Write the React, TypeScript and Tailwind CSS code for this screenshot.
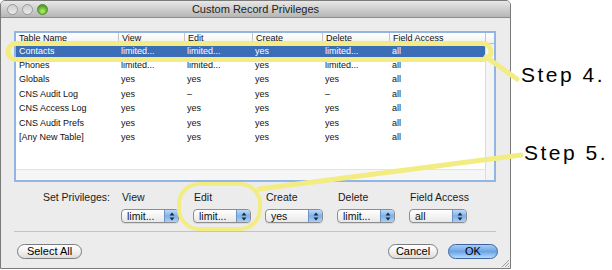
const rows = [
  ['Contacts', 'limited...', 'limited...', 'yes', 'limited...', 'all'],
  ['Phones', 'limited...', 'limited...', 'yes', 'limited...', 'all'],
  ['Globals', 'yes', 'yes', 'yes', 'yes', 'all'],
  ['CNS Audit Log', 'yes', '–', 'yes', '–', 'all'],
  ['CNS Access Log', 'yes', 'yes', 'yes', 'yes', 'all'],
  ['CNS Audit Prefs', 'yes', 'yes', 'yes', 'yes', 'all'],
  ['[Any New Table]', 'yes', 'yes', 'yes', 'yes', 'all'],
];

const headers = ['Table Name', 'View', 'Edit', 'Create', 'Delete', 'Field Access'];

const privileges = [
  { label: 'View', value: 'limit...' },
  { label: 'Edit', value: 'limit...' },
  { label: 'Create', value: 'yes' },
  { label: 'Delete', value: 'limit...' },
  { label: 'Field Access', value: 'all' },
];

const gridCols = 'grid grid-cols-[102px_66px_68px_70px_67px_96px]';

function Light({ green = false }: { green?: boolean }) {
  return (
    <span
      className={`block h-[11px] w-[11px] rounded-full border ${
        green
          ? 'border-[#4f8a2b] bg-[radial-gradient(circle_at_50%_70%,#b6f07a,#5fae2c_60%,#3f7f1c)]'
          : 'border-[#9a9a9a] bg-gradient-to-b from-[#cfcfcf] to-[#e9e9e9]'
      }`}
    />
  );
}

function Popup({ value }: { value: string }) {
  return (
    <div className="mt-[5px] flex h-[14px] w-[58px] overflow-hidden rounded-[4px] border border-[#8d8d8d] bg-gradient-to-b from-white to-[#e8e8e8] shadow-[0_1px_0_rgba(0,0,0,0.08)]">
      <span className="flex-1 pl-[5px] text-[10.5px] leading-[12px] text-[#111]">{value}</span>
      <span className="flex w-[14px] flex-col items-center justify-center border-l border-[#6f93c4] bg-gradient-to-b from-[#bcdaf7] via-[#7fb2ea] to-[#a9d0f7]">
        <svg width="6" height="9" viewBox="0 0 6 9">
          <path d="M3 0.5 L5.5 3.5 H0.5 Z" fill="#1d2a3a" />
          <path d="M3 8.5 L5.5 5.5 H0.5 Z" fill="#1d2a3a" />
        </svg>
      </span>
    </div>
  );
}

function PillButton({ label, primary = false, width }: { label: string; primary?: boolean; width: string }) {
  return (
    <div
      className={`flex h-[15px] ${width} items-center justify-center rounded-full border text-[11px] leading-none ${
        primary
          ? 'border-[#3d63a3] bg-gradient-to-b from-[#a9cdf3] via-[#6aa3e6] to-[#b7dbfb] text-black'
          : 'border-[#7c7c7c] bg-gradient-to-b from-white via-[#f2f2f2] to-[#dcdcdc] text-black'
      }`}
    >
      {label}
    </div>
  );
}

export default function App() {
  return (
    <div className="relative h-[270px] w-[612px] overflow-hidden bg-white font-['Liberation_Sans',Arial,sans-serif] text-[#1a1a1a]">
      <div className="relative flex h-[269px] w-[511px] flex-col overflow-hidden rounded-t-[5px] border border-[#7a7a7a] bg-[#ececec]">
        {/* title bar */}
        <div className="relative flex h-[17px] shrink-0 items-center border-b border-[#8e8e8e] bg-gradient-to-b from-[#e8e8e8] to-[#b6b6b6]">
          <div className="flex gap-[4px] pl-[6px]">
            <Light />
            <Light />
            <Light green />
          </div>
          <span className="absolute left-0 right-0 text-center text-[11px] leading-none text-[#222]">
            Custom Record Privileges
          </span>
        </div>

        <div className="flex flex-col pl-[13px] pr-[14px]">
          {/* table */}
          <div className="mt-[13px] flex h-[151px] flex-col border-2 border-[#93b5e3] bg-white">
            <div className="flex h-[11px] border-b border-[#bdbdbd] bg-gradient-to-b from-white to-[#f1f1f1]">
              <div className={gridCols}>
                {headers.map((h, i) => (
                  <div
                    key={h}
                    className={`pl-[3px] text-[9px] leading-[11px] text-[#111] ${i > 0 ? 'border-l border-[#c4c4c4]' : ''}`}
                  >
                    {h}
                  </div>
                ))}
              </div>
              <div className="flex-1 border-l border-[#c4c4c4]" />
            </div>
            <div className="flex flex-1">
              <div className="flex flex-1 flex-col">
                <div className="flex-1">
                  {rows.map((r, ri) => (
                    <div
                      key={r[0]}
                      className={`${gridCols} h-[14.4px] items-center text-[9px] ${
                        ri === 0 ? 'bg-[#3c6db7] text-white' : 'text-[#111]'
                      }`}
                    >
                      {r.map((c, ci) => (
                        <div key={ci} className="pl-[3px] leading-[11px]">
                          {c}
                        </div>
                      ))}
                    </div>
                  ))}
                </div>
                <div className="h-[11px] border-t border-[#e2e2e2] bg-[#f6f6f6]" />
              </div>
              <div className="w-[9px] border-l border-[#dcdcdc] bg-[#f4f4f4]" />
            </div>
          </div>

          {/* privileges controls */}
          <div className="mt-[9px] flex text-[10.5px]">
            <div className="w-[96px] text-right leading-[13px]">Set Privileges:</div>
            <div className="ml-[11px] flex">
              {privileges.map((p) => (
                <div key={p.label} className="flex w-[72px] flex-col">
                  <span className="pl-[1px] leading-[13px]">{p.label}</span>
                  <Popup value={p.value} />
                </div>
              ))}
            </div>
          </div>

          <div className="mt-[8px] h-px bg-[#c4c4c4]" />

          <div className="mt-[12px] flex items-center pl-[3px]">
            <PillButton label="Select All" width="w-[65px]" />
            <div className="ml-auto mr-[-2px] flex gap-[10px]">
              <PillButton label="Cancel" width="w-[50px]" />
              <PillButton label="OK" primary width="w-[50px]" />
            </div>
          </div>
        </div>

        {/* resize grip */}
        <svg className="absolute bottom-[1px] right-[1px]" width="8" height="8" viewBox="0 0 8 8">
          <path d="M1 8 L8 1 M4 8 L8 4 M7 8 L8 7" stroke="#8a8a8a" strokeWidth="0.8" />
        </svg>
      </div>

      {/* annotations */}
      <svg className="pointer-events-none absolute left-0 top-0" width="612" height="270" viewBox="0 0 612 270">
        <g fill="none" stroke="#f2ec82" strokeWidth="5" strokeLinecap="round" strokeLinejoin="round">
          <rect x="8" y="43.5" width="483" height="16" rx="8" />
          <path d="M486 57 L517 79" />
          <rect x="179" y="184" width="81" height="45" rx="20" strokeWidth="4" />
          <path d="M259 189 L521 155" />
        </g>
      </svg>
      <span className="absolute left-[521px] top-[63px] text-[21px] leading-[24px] tracking-[2.5px] text-black">
        Step 4.
      </span>
      <span className="absolute left-[524px] top-[141px] text-[21px] leading-[24px] tracking-[2.5px] text-black">
        Step 5.
      </span>
    </div>
  );
}
